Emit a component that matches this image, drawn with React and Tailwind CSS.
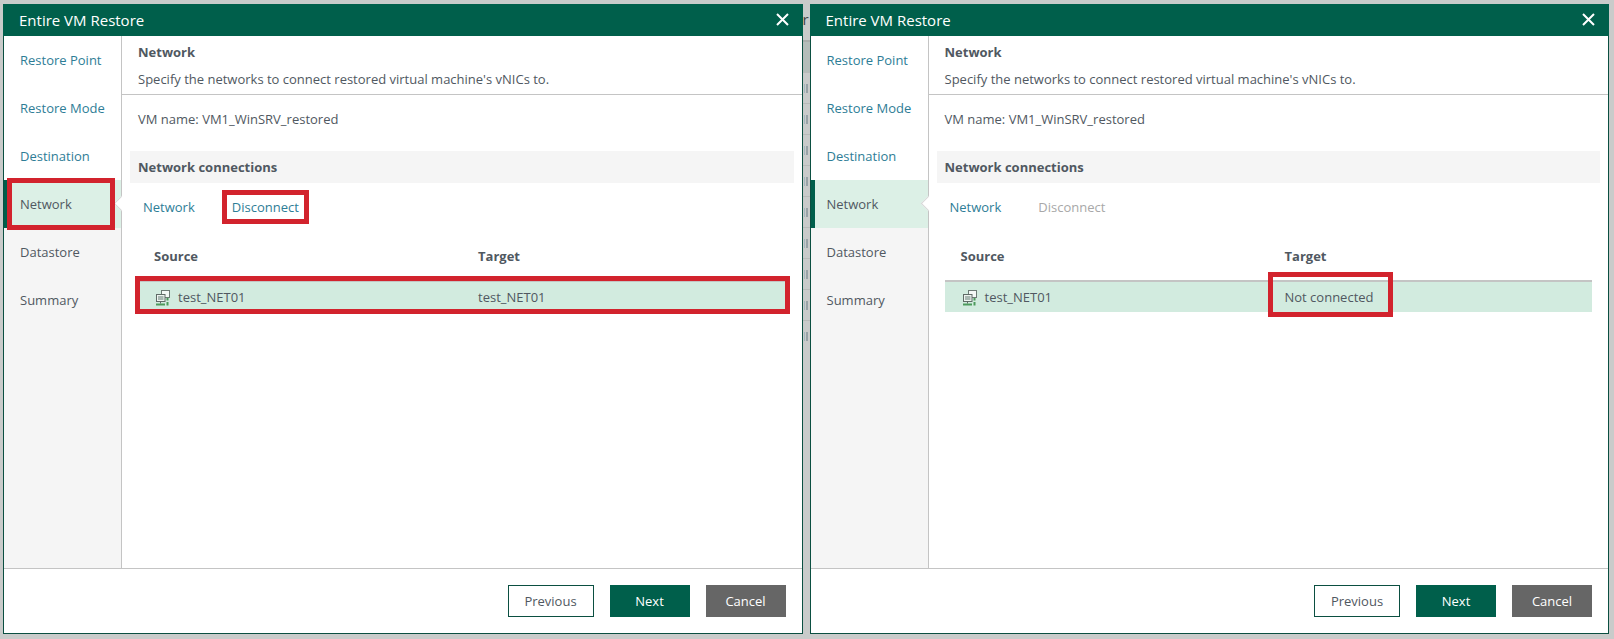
const FONT = { fontFamily: '"Open Sans", "Noto Sans", sans-serif' };

const steps = ['Restore Point', 'Restore Mode', 'Destination', 'Network', 'Datastore', 'Summary'];
const gapRows = [0, 1, 2, 3, 4, 5, 6, 7, 8];

const NetworkIcon = () => (
  <svg width="14" height="16" viewBox="0 0 14 16" fill="none" className="shrink-0">
    <rect x="5.5" y="0.5" width="8" height="7" fill="#f4f8f6" stroke="#6d7a75" />
    <rect x="0.5" y="4.5" width="8.5" height="7" fill="#eef3f0" stroke="#5f6b66" />
    <rect x="2" y="6" width="5.5" height="4" fill="#a9b8b2" />
    <path d="M0 14.5h9" stroke="#4d9a5c" strokeWidth="2" />
    <path d="M11.5 8v2.5M11.5 12v3.5" stroke="#4d9a5c" strokeWidth="2" />
    <path d="M4.5 12v1.5" stroke="#5f6b66" />
  </svg>
);

const Sidebar = ({ boxed }) => (
  <div className="w-[118px] shrink-0 bg-[#f5f5f5] border-r border-[#c4c4c4] flex flex-col">
    {steps.map((step, i) => {
      const active = step === 'Network';
      return (
        <div
          key={step}
          className={
            'h-12 flex items-center relative pt-[2px] ' +
            (active
              ? 'bg-[#dcf0e6] border-l-4 border-[#005f4b] text-[#505861] w-[117px] pl-3'
              : i < 3
                ? 'bg-white text-[#2e7d96] w-[117px] pl-4'
                : 'text-[#505861] pl-4')
          }
        >
          {step}
          {active && (
            <span className="absolute left-[108px] top-[18px] w-[11px] h-[11px] rotate-45 bg-white border-l border-b border-[#d8d8d8]" />
          )}
          {active && boxed && (
            <span className="absolute left-[-1px] top-[-2px] w-[108px] h-[52px] border-[5px] border-[#d2232d]" />
          )}
        </div>
      );
    })}
  </div>
);

const Wizard = ({ connected }) => (
  <div className="flex-1 h-full flex flex-col border border-[#0b4f41] border-t-0 bg-white text-[13px] text-[#505861]" style={FONT}>
    <div className="h-8 bg-[#005f4b] flex items-center justify-between pl-4 pr-[14px] text-white text-[15px] -mx-px shrink-0">
      <span>Entire VM Restore</span>
      <svg width="13" height="13" viewBox="0 0 13 13" className="mb-[2px]">
        <path d="M1 1l11 11M12 1L1 12" stroke="#fff" strokeWidth="2" />
      </svg>
    </div>
    <div className="flex-1 flex min-h-0">
      <Sidebar boxed={connected} />
      <div className="flex-1 flex flex-col min-w-0">
        <div className="h-[59px] border-b border-[#c4c4c4] pl-4 pt-[6px] shrink-0">
          <div className="font-bold leading-5">Network</div>
          <div className="mt-[7px] leading-5">Specify the networks to connect restored virtual machine's vNICs to.</div>
        </div>
        <div className="pl-4 pt-[14px] leading-5 h-[56px] shrink-0">VM name: VM1_WinSRV_restored</div>
        <div className="mx-2 h-8 bg-[#f5f5f5] flex items-center pl-2 pt-[2px] font-bold shrink-0">Network connections</div>
        <div className="flex items-center h-12 pl-[21px] pt-[2px] gap-[37px] shrink-0">
          <span className="text-[#2e7d96]">Network</span>
          <span className={connected ? 'text-[#2e7d96] relative' : 'text-[#a8a8a8] relative'}>
            Disconnect
            {connected && <span className="absolute left-[-10px] top-[-8px] w-[87px] h-[34px] border-[5px] border-[#d2232d]" />}
          </span>
        </div>
        <div className="mx-4">
          <div className="flex items-center h-[51px] pt-[2px] font-bold border-b-2 border-[#c4c4c4]">
            <div className="w-[340px] pl-4">Source</div>
            <div>Target</div>
          </div>
          <div className="flex items-center h-[30px] pt-[2px] bg-[#d2ebdf] relative">
            <div className="w-[340px] pl-[18px] flex items-center gap-2">
              <NetworkIcon />
              test_NET01
            </div>
            <div className="relative">
              {connected ? 'test_NET01' : 'Not connected'}
              {!connected && <span className="absolute left-[-17px] top-[-16px] w-[125px] h-[45px] border-[5px] border-[#d2232d]" />}
            </div>
            {connected && <span className="absolute left-[-3px] right-[-4px] top-[-6px] h-[38px] border-[5px] border-[#d2232d]" />}
          </div>
        </div>
      </div>
    </div>
    <div className="h-[65px] border-t border-[#c4c4c4] flex items-center justify-end gap-4 pr-4 shrink-0">
      <button className="w-[86px] h-8 pt-px border border-[#0b4f41] bg-white">Previous</button>
      <button className="w-20 h-8 pt-px bg-[#005f4b] text-white">Next</button>
      <button className="w-20 h-8 pt-px bg-[#666666] text-white">Cancel</button>
    </div>
  </div>
);

// sliver of the app table that shows between the two dialogs
const BackgroundGap = () => (
  <div className="w-[7px] shrink-0 flex flex-col overflow-hidden" style={FONT}>
    <div className="h-[36px] pt-[5px] text-[15px] leading-5 text-[#444]">r</div>
    <div className="h-[32px] bg-[#b4bdb9] border-t-2 border-[#a9aeab]" />
    {gapRows.map((row) => (
      <div key={row} className="h-[31px] border-t border-[#b8bbb9] flex items-center justify-center gap-px">
        <span className="w-px h-[9px] bg-[#a3b7bd]" />
        <span className="w-[2px] h-[9px] bg-[#98a3a7]" />
      </div>
    ))}
  </div>
);

const App = () => (
  <div className="w-[1614px] h-[639px] bg-[#c9cbca] pt-1 pb-[5px] pl-[3px] pr-[5px] flex overflow-hidden">
    <Wizard connected />
    <BackgroundGap />
    <Wizard />
  </div>
);

export default App;
